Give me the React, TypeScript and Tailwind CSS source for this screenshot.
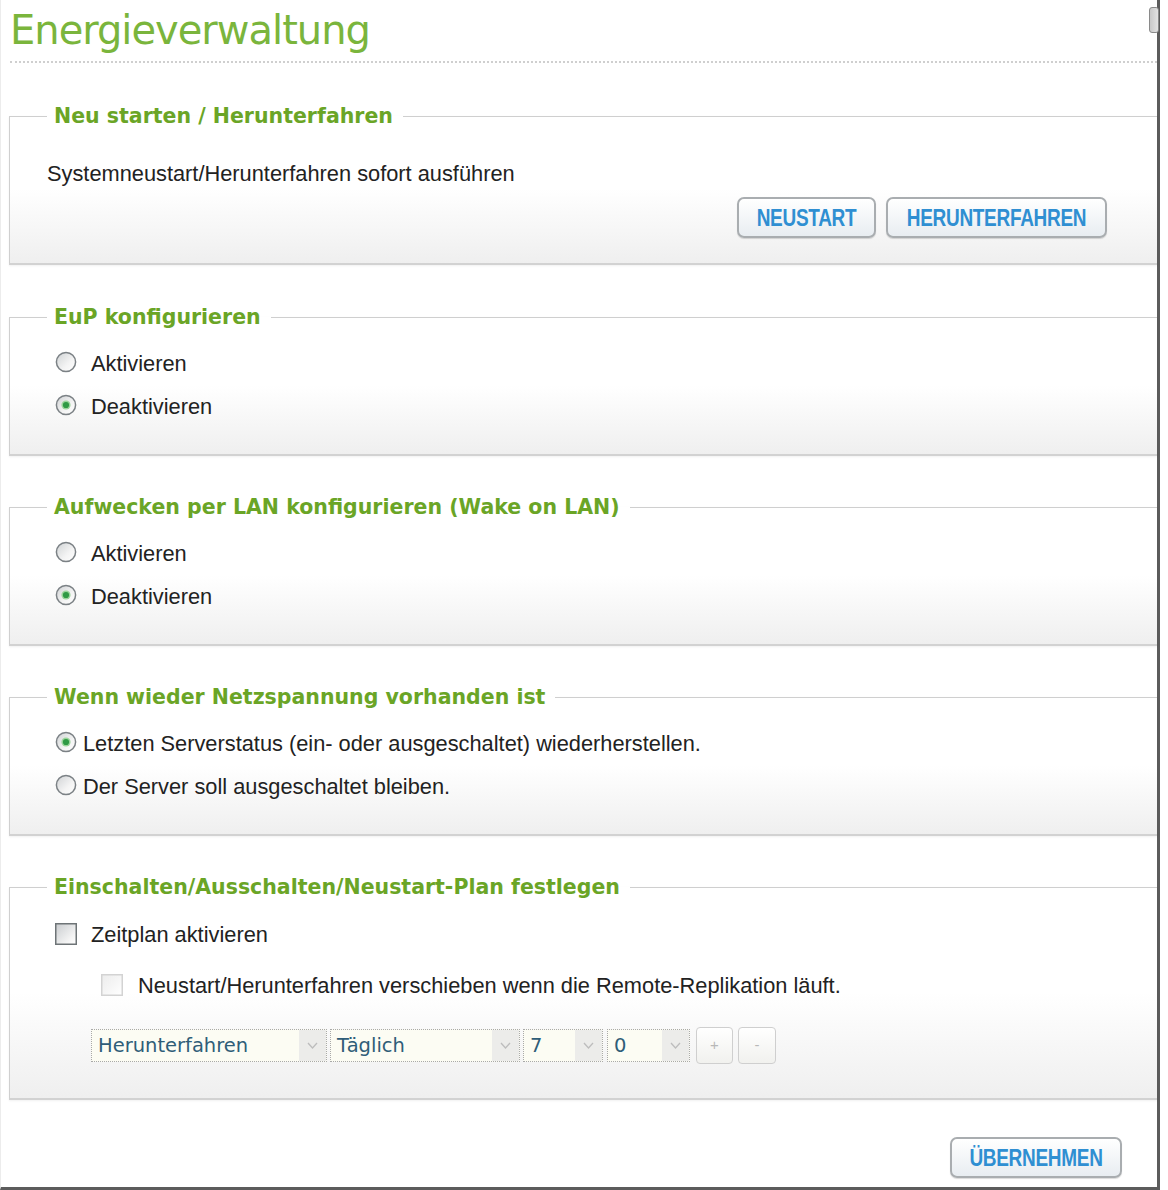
import React from "react";

const SANS = { fontFamily: '"Liberation Sans", Arial, sans-serif' };
const DJ = { fontFamily: '"DejaVu Sans", Verdana, sans-serif' };

function Radio({ checked }: { checked?: boolean }) {
  return (
    <svg width="22" height="22" viewBox="0 0 22 22" className="shrink-0">
      <defs>
        <linearGradient id="rg" x1="0" y1="0" x2="1" y2="1">
          <stop offset="0" stopColor="#cfd2d4" />
          <stop offset="0.6" stopColor="#f4f4f4" />
          <stop offset="1" stopColor="#ffffff" />
        </linearGradient>
      </defs>
      <circle cx="11" cy="11" r="9.6" fill="url(#rg)" stroke="#7b8185" strokeWidth="1.5" />
      {checked && (
        <>
          <circle cx="11" cy="11" r="4.6" fill="#9bd59b" />
          <circle cx="11" cy="11" r="3.1" fill="#2f9a45" />
        </>
      )}
    </svg>
  );
}

function Checkbox({ disabled }: { disabled?: boolean }) {
  return (
    <svg width="22" height="22" viewBox="0 0 22 22" className="shrink-0">
      <defs>
        <linearGradient id="cg" x1="0" y1="0" x2="1" y2="1">
          <stop offset="0" stopColor="#c9cccf" />
          <stop offset="0.7" stopColor="#f3f3f3" />
          <stop offset="1" stopColor="#ffffff" />
        </linearGradient>
        <linearGradient id="cgd" x1="0" y1="0" x2="1" y2="1">
          <stop offset="0" stopColor="#ececec" />
          <stop offset="1" stopColor="#ffffff" />
        </linearGradient>
      </defs>
      <rect
        x="0.75"
        y="0.75"
        width="20.5"
        height="20.5"
        fill={disabled ? "url(#cgd)" : "url(#cg)"}
        stroke={disabled ? "#d3d3d3" : "#6e7477"}
        strokeWidth="1.5"
      />
    </svg>
  );
}

function Chevron() {
  return (
    <svg width="11" height="7" viewBox="0 0 11 7">
      <path d="M1 1 L5.5 6 L10 1" fill="none" stroke="#bdbdbd" strokeWidth="1.3" />
    </svg>
  );
}

function Select({ value, w }: { value: string; w: string }) {
  return (
    <div
      className={`${w} h-[33px] flex items-stretch border border-dotted border-[#a9a9a9] bg-[#fcfcf3]`}
    >
      <div className="flex-1 flex items-center pl-[6px] text-[19.5px] text-[#2f5d78]" style={DJ}>
        {value}
      </div>
      <div className="w-[27px] flex items-center justify-center bg-[#ececea]">
        <Chevron />
      </div>
    </div>
  );
}

function Btn({ label, w }: { label: string; w: string }) {
  return (
    <div
      className={`${w} h-[41px] rounded-[7px] border-2 border-[#a9adb0] bg-linear-to-b from-white to-[#e8edf1] flex items-center justify-center shadow-[0_1px_1px_rgba(0,0,0,0.15)]`}
    >
      <span
        className="inline-block scale-y-125 text-[19px] font-bold text-[#2f8fd2] leading-none tracking-[-0.3px]"
        style={SANS}
      >
        {label}
      </span>
    </div>
  );
}

function Fieldset({
  title,
  h,
  mt,
  children,
}: {
  title: string;
  h: string;
  mt: string;
  children: React.ReactNode;
}) {
  return (
    <div
      className={`${mt} ${h} border-l border-l-[#cfcfcf] border-b-2 border-b-[#d2d2d2] bg-linear-to-b from-white via-white to-[#efefef] shadow-[0_1px_2px_rgba(0,0,0,0.06)] flex flex-col`}
    >
      <div className="-mt-[13px] h-[26px] flex items-center shrink-0">
        <div className="w-[37px] h-px bg-[#cfcfcf]" />
        <div
          className="px-[7px] text-[20.5px] font-bold text-[#6aa526] leading-[26px] whitespace-nowrap"
          style={DJ}
        >
          {title}
        </div>
        <div className="flex-1 h-px bg-[#cfcfcf] ml-[3px]" />
      </div>
      {children}
    </div>
  );
}

function RadioRow({
  checked,
  label,
  gap,
  mt,
}: {
  checked?: boolean;
  label: string;
  gap: string;
  mt: string;
}) {
  return (
    <div className={`${mt} h-[30px] flex items-center ${gap} pl-[45px]`}>
      <Radio checked={checked} />
      <span className="text-[21.8px] text-[#222] leading-[30px] pt-[3px]" style={SANS}>
        {label}
      </span>
    </div>
  );
}

export default function App() {
  return (
    <div className="w-[1168px] h-[1190px] bg-white relative overflow-hidden" style={SANS}>
      <div className="w-[1160px] h-[1190px] border-r-[3px] border-b-[3px] border-[#5c5c5c] border-l border-l-[#ececec] pl-[8px] flex flex-col">
        <div className="pt-[7px] pl-[1px]">
          <div
            className="text-[40px] leading-[46px] tracking-[-1px] text-[#7ab53c]"
            style={DJ}
          >
            Energieverwaltung
          </div>
        </div>
        <div className="mt-[8px] ml-[1px] border-t-2 border-dotted border-[#cfcfcf]" />

        <Fieldset title="Neu starten / Herunterfahren" h="h-[149px]" mt="mt-[53px]">
          <div className="mt-[32px] pl-[37px] text-[21.8px] leading-[26px] text-[#222]" style={SANS}>
            Systemneustart/Herunterfahren sofort ausführen
          </div>
          <div className="mt-[10px] flex justify-end gap-[10px] pr-[50px]">
            <Btn label="NEUSTART" w="w-[139px]" />
            <Btn label="HERUNTERFAHREN" w="w-[221px]" />
          </div>
        </Fieldset>

        <Fieldset title="EuP konfigurieren" h="h-[139px]" mt="mt-[52px]">
          <RadioRow label="Aktivieren" gap="gap-[14px]" mt="mt-[17px]" />
          <RadioRow checked label="Deaktivieren" gap="gap-[14px]" mt="mt-[13px]" />
        </Fieldset>

        <Fieldset
          title="Aufwecken per LAN konfigurieren (Wake on LAN)"
          h="h-[139px]"
          mt="mt-[51px]"
        >
          <RadioRow label="Aktivieren" gap="gap-[14px]" mt="mt-[17px]" />
          <RadioRow checked label="Deaktivieren" gap="gap-[14px]" mt="mt-[13px]" />
        </Fieldset>

        <Fieldset title="Wenn wieder Netzspannung vorhanden ist" h="h-[139px]" mt="mt-[51px]">
          <RadioRow
            checked
            label="Letzten Serverstatus (ein- oder ausgeschaltet) wiederherstellen."
            gap="gap-[6px]"
            mt="mt-[17px]"
          />
          <RadioRow
            label="Der Server soll ausgeschaltet bleiben."
            gap="gap-[6px]"
            mt="mt-[13px]"
          />
        </Fieldset>

        <Fieldset
          title="Einschalten/Ausschalten/Neustart-Plan festlegen"
          h="h-[213px]"
          mt="mt-[51px]"
        >
          <div className="mt-[19px] h-[30px] flex items-center gap-[14px] pl-[45px]">
            <Checkbox />
            <span className="text-[21.8px] text-[#222] pt-[3px]" style={SANS}>
              Zeitplan aktivieren
            </span>
          </div>
          <div className="mt-[21px] h-[30px] flex items-center gap-[15px] pl-[91px]">
            <Checkbox disabled />
            <span className="text-[21.8px] text-[#222] pt-[3px]" style={SANS}>
              Neustart/Herunterfahren verschieben wenn die Remote-Replikation läuft.
            </span>
          </div>
          <div className="mt-[27px] flex items-center pl-[81px]">
            <Select value="Herunterfahren" w="w-[236px]" />
            <div className="w-[3px]" />
            <Select value="Täglich" w="w-[190px]" />
            <div className="w-[3px]" />
            <Select value="7" w="w-[80px]" />
            <div className="w-[4px]" />
            <Select value="0" w="w-[83px]" />
            <div className="w-[6px]" />
            <div className="w-[37px] h-[37px] rounded-[4px] border border-[#cfcfcf] bg-linear-to-b from-white to-[#f1f1ee] flex items-center justify-center text-[15px] text-[#b8b8b8]">
              +
            </div>
            <div className="w-[5px]" />
            <div className="w-[38px] h-[37px] rounded-[4px] border border-[#cfcfcf] bg-linear-to-b from-white to-[#f1f1ee] flex items-center justify-center text-[15px] text-[#b8b8b8]">
              -
            </div>
          </div>
        </Fieldset>

        <div className="mt-[37px] flex justify-end pr-[35px]">
          <Btn label="ÜBERNEHMEN" w="w-[172px]" />
        </div>
      </div>
      <div className="absolute left-[1149px] top-[7px] w-[10px] h-[26px] rounded-[3px] border border-[#8a8a8a] bg-linear-to-r from-[#c9c9c9] to-[#e3e3e3]" />
    </div>
  );
}
